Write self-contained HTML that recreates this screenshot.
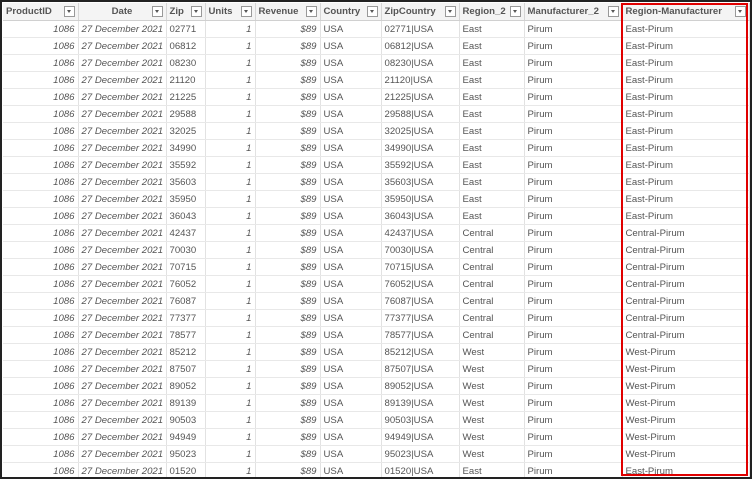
<!DOCTYPE html>
<html><head><meta charset="utf-8"><style>
body{margin:0;width:752px;height:479px;overflow:hidden;background:#fff;font-family:"Liberation Sans",sans-serif;}
.frame{position:absolute;left:0;top:0;width:748px;height:475px;border:2px solid #222;overflow:hidden;background:#fff}
table{border-collapse:collapse;table-layout:fixed;width:746px;position:absolute;left:1px;top:1px;font-size:9.6px;color:#555}
td,th{height:16px;padding:0 3px;border-right:1px solid #e2e2e2;border-bottom:1px solid #e8e8e8;white-space:nowrap;overflow:hidden}
th{background:#f4f4f4;color:#555;font-weight:bold;text-align:left;height:17px;position:relative;border-right:1px solid #d6d6d6;border-bottom:1px solid #d0d0d0;font-size:9.6px}
th span.dd{position:absolute;right:3px;top:3px;width:9px;height:9px;border:1px solid #999;background:#fff}
th span.dd:after{content:"";position:absolute;left:2px;top:3px;border-left:2.5px solid transparent;border-right:2.5px solid transparent;border-top:3px solid #555}
.r{text-align:right}.i{font-style:italic}
.red{position:absolute;left:621px;top:3px;width:123px;height:469px;border:2px solid #e00000}
</style></head><body>
<div class="frame">
<table>
<colgroup><col style="width:75px"><col style="width:88px"><col style="width:39px"><col style="width:50px"><col style="width:65px"><col style="width:61px"><col style="width:78px"><col style="width:65px"><col style="width:98px"><col style="width:127px"></colgroup>
<tr><th>ProductID<span class="dd"></span></th><th style="text-align:center">Date<span class="dd"></span></th><th>Zip<span class="dd"></span></th><th>Units<span class="dd"></span></th><th>Revenue<span class="dd"></span></th><th>Country<span class="dd"></span></th><th>ZipCountry<span class="dd"></span></th><th>Region_2<span class="dd"></span></th><th>Manufacturer_2<span class="dd"></span></th><th>Region-Manufacturer<span class="dd"></span></th></tr>
<tbody id="b"></tbody>
</table>
</div>
<div class="red"></div>
<script>
var z=[["02771","East"],["06812","East"],["08230","East"],["21120","East"],["21225","East"],["29588","East"],["32025","East"],["34990","East"],["35592","East"],["35603","East"],["35950","East"],["36043","East"],["42437","Central"],["70030","Central"],["70715","Central"],["76052","Central"],["76087","Central"],["77377","Central"],["78577","Central"],["85212","West"],["87507","West"],["89052","West"],["89139","West"],["90503","West"],["94949","West"],["95023","West"],["01520","East"]];
var h="";z.forEach(function(r){h+='<tr><td class="r i">1086</td><td class="i">27 December 2021</td><td>'+r[0]+'</td><td class="r i">1</td><td class="r i">$89</td><td>USA</td><td>'+r[0]+'|USA</td><td>'+r[1]+'</td><td>Pirum</td><td>'+r[1]+'-Pirum</td></tr>';});
document.getElementById("b").innerHTML=h;
</script>
</body></html>
